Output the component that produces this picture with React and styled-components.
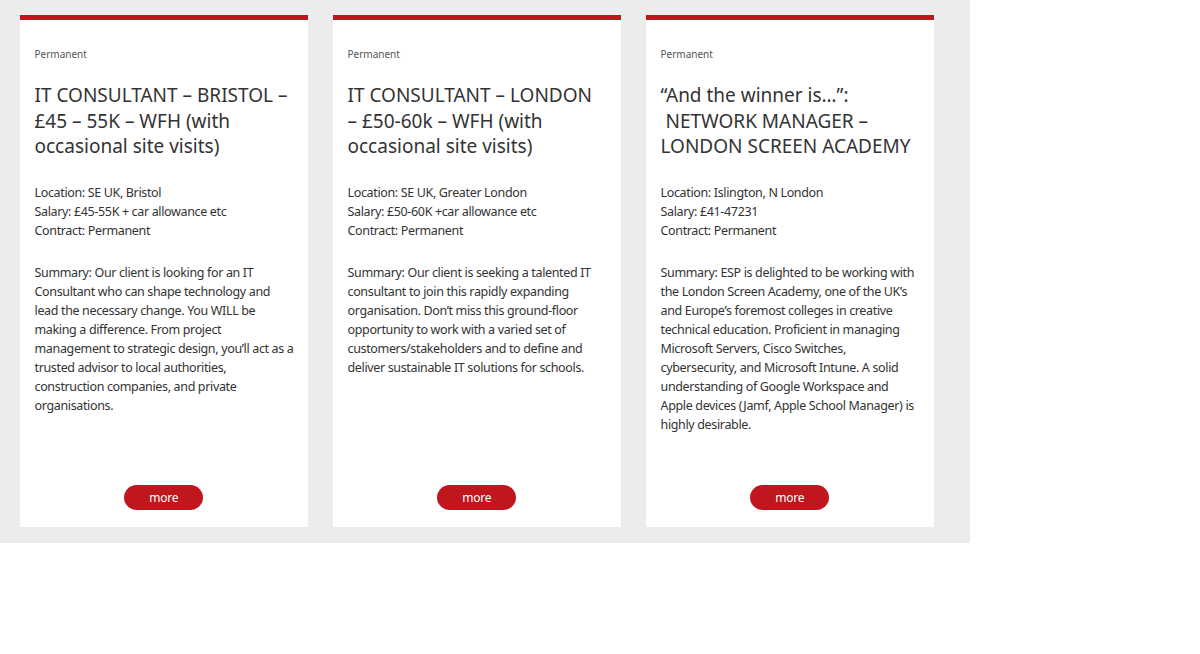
import React from "react";
import styled, { createGlobalStyle } from "styled-components";

const Global = createGlobalStyle`
  html, body { margin: 0; padding: 0; background: #ffffff; }
  body { font-family: "Noto Sans", "Open Sans", sans-serif; color: #333333; }
  * { box-sizing: border-box; }
`;

const Section = styled.section`
  width: 970px;
  background: #ececec;
  padding: 15px 36px 16px 20px;
`;

const Grid = styled.div`
  display: grid;
  grid-template-columns: repeat(3, 288px);
  column-gap: 25px;
`;

const Card = styled.article`
  height: 512px;
  background: #ffffff;
  border-top: 5px solid #c0161d;
  padding: 27px 12px 17px 14.5px;
  display: flex;
  flex-direction: column;
`;

const Tag = styled.div`
  font-size: 10px;
  line-height: 14px;
  color: #555555;
`;

const Title = styled.h2`
  margin: 22px 0 0;
  padding-right: 4px;
  font-size: 19px;
  line-height: 25.5px;
  font-weight: 400;
  color: #333333;
`;

const Text = styled.p`
  margin: ${(p) => p.$top}px 0 0;
  font-size: 12.5px;
  line-height: 19px;
  color: #333333;
  letter-spacing: -0.35px;
`;

const Footer = styled.div`
  margin-top: auto;
  margin-right: 3px;
  display: flex;
  justify-content: center;
`;

const More = styled.button`
  width: 79px;
  height: 25px;
  border: none;
  border-radius: 13px;
  background: #c0161d;
  color: #ffffff;
  font-family: "Noto Sans", sans-serif;
  font-size: 12px;
  letter-spacing: -0.2px;
  cursor: pointer;
`;

const jobs = [
  {
    title: "IT CONSULTANT – BRISTOL – £45 – 55K – WFH (with occasional site visits)",
    details: ["Location: SE UK, Bristol", "Salary: £45-55K + car allowance etc", "Contract: Permanent"],
    summary:
      "Summary: Our client is looking for an IT Consultant who can shape technology and lead the necessary change. You WILL be making a difference. From project management to strategic design, you’ll act as a trusted advisor to local authorities, construction companies, and private organisations.",
  },
  {
    title: "IT CONSULTANT – LONDON – £50-60k – WFH (with occasional site visits)",
    details: ["Location: SE UK, Greater London", "Salary: £50-60K +car allowance etc", "Contract: Permanent"],
    summary:
      "Summary: Our client is seeking a talented IT consultant to join this rapidly expanding organisation. Don’t miss this ground-floor opportunity to work with a varied set of customers/stakeholders and to define and deliver sustainable IT solutions for schools.",
  },
  {
    title: "“And the winner is…”: \u00a0NETWORK MANAGER – LONDON SCREEN ACADEMY",
    details: ["Location: Islington, N London", "Salary: £41-47231", "Contract: Permanent"],
    summary:
      "Summary: ESP is delighted to be working with the London Screen Academy, one of the UK’s and Europe’s foremost colleges in creative technical education. Proficient in managing Microsoft Servers, Cisco Switches, cybersecurity, and Microsoft Intune. A solid understanding of Google Workspace and Apple devices (Jamf, Apple School Manager) is highly desirable.",
  },
];

export default function App() {
  return (
    <>
      <Global />
      <Section>
        <Grid>
          {jobs.map((j, i) => (
            <Card key={i}>
              <Tag>Permanent</Tag>
              <Title>{j.title}</Title>
              <Text $top={23}>
                {j.details.map((d, k) => (
                  <React.Fragment key={k}>
                    {d}
                    {k < j.details.length - 1 && <br />}
                  </React.Fragment>
                ))}
              </Text>
              <Text $top={23}>{j.summary}</Text>
              <Footer>
                <More>more</More>
              </Footer>
            </Card>
          ))}
        </Grid>
      </Section>
    </>
  );
}
